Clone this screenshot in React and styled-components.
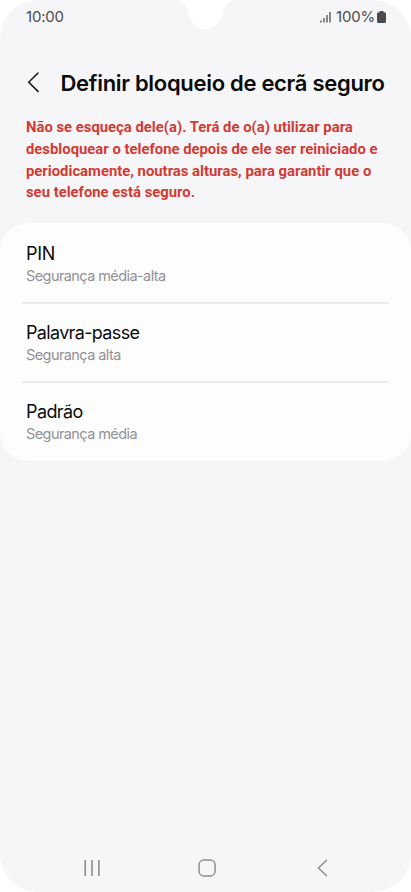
import React from 'react'
import styled, { createGlobalStyle } from 'styled-components'

const GlobalStyle = createGlobalStyle`
    * {
        box-sizing: border-box;
    }
    body {
        margin: 0;
        background-color: #ffffff;
        overflow: hidden;
    }
`
const Screen = styled.div`
    position: relative;
    display: flex;
    flex-direction: column;
    width: 411px;
    height: 892px;
    overflow: hidden;
    background-color: #f6f6f8;
    border-radius: 38px;
    font-family: Inter, "Liberation Sans", sans-serif;
`
const Notch = styled.svg`
    position: absolute;
    top: 0;
    left: 176px;
`
const StatusBar = styled.div`
    display: flex;
    justify-content: space-between;
    align-items: center;
    height: 33px;
    padding: 0 25px 0 26px;
    color: #4c4c4e;
    font-size: 15px;
`
const Clock = styled.span`
    letter-spacing: -0.2px;
`
const Status = styled.div`
    display: flex;
    align-items: center;
`
const Percent = styled.span`
    margin: 0 2px 0 4px;
    letter-spacing: -0.2px;
`
const Header = styled.div`
    display: flex;
    align-items: center;
    height: 44px;
    margin-top: 28px;
    padding-left: 27px;
`
const Title = styled.h1`
    margin: 0 0 0 20.5px;
    color: #0a0a0a;
    font-size: 22px;
    font-weight: 600;
    letter-spacing: -0.3px;
    line-height: 30px;
    white-space: nowrap;
`
const Warning = styled.p`
    margin: 12px 0 0;
    padding-left: 26px;
    color: #d23a33;
    font-family: Roboto, sans-serif;
    font-size: 14.8px;
    font-weight: 700;
    letter-spacing: 0.02px;
    line-height: 21.8px;
    white-space: nowrap;
`
const Line = styled.span`
    display: block;
`
const Card = styled.div`
    height: 238px;
    margin-top: 18.8px;
    padding: 0 22px;
    background-color: #fdfdfe;
    border-radius: 28px;
`
const Option = styled.div`
    height: 79.2px;
    padding: 19px 4px 0;
    & + & {
        border-top: 2px solid #ebebed;
        padding-top: 17.1px;
    }
`
const Name = styled.div`
    color: #0c0c0c;
    font-size: 18px;
    letter-spacing: ${props => props.$spacing};
    line-height: 24px;
`
const Level = styled.div`
    color: #929295;
    font-size: 14.5px;
    letter-spacing: -0.58px;
    line-height: 20px;
`
const NavBar = styled.div`
    display: flex;
    justify-content: space-between;
    align-items: center;
    height: 48px;
    margin-top: auto;
    padding: 0 79px 0 82px;
`

const options = [
    { name: 'PIN', level: 'Segurança média-alta', spacing: '-0.3px' },
    { name: 'Palavra-passe', level: 'Segurança alta', spacing: '-0.66px' },
    { name: 'Padrão', level: 'Segurança média', spacing: '-0.6px' },
]

const App = () => {
    return (
        <>
            <GlobalStyle/>
            <Screen>
                <Notch width="60" height="30" viewBox="0 0 60 30">
                    <path d="M0 0C7 1 10 5 11.500 11C14 22 20 29 29.500 29C39 29 45 22 47.500 11C49 5 52 1 59 0Z" fill="#fff"/>
                </Notch>
                <StatusBar>
                    <Clock>10:00</Clock>
                    <Status>
                        <svg width="12" height="12" viewBox="0 0 12 12" stroke="#59595b" strokeWidth="1.400">
                            <path d="M0.900 9.500V11.500M4 7V11.500M7 4V11.500M10 1V11.500"/>
                        </svg>
                        <Percent>100%</Percent>
                        <svg width="9" height="12" viewBox="0 0 9 12" fill="#4c4c4e">
                            <path d="M2.500 0H6.500V1.300H7.500Q9 1.300 9 2.800V10.500Q9 12 7.500 12H1.500Q0 12 0 10.500V2.800Q0 1.300 1.500 1.300H2.500Z"/>
                        </svg>
                    </Status>
                </StatusBar>
                <Header>
                    <svg width="13" height="22" viewBox="0 0 13 22" fill="none" stroke="#141414" strokeWidth="1.500">
                        <path d="M11 1L1.700 10.200L11 19.400" strokeLinecap="round" strokeLinejoin="round"/>
                    </svg>
                    <Title>Definir bloqueio de ecrã seguro</Title>
                </Header>
                <Warning>
                    <Line>Não se esqueça dele(a). Terá de o(a) utilizar para</Line>
                    <Line>desbloquear o telefone depois de ele ser reiniciado e</Line>
                    <Line>periodicamente, noutras alturas, para garantir que o</Line>
                    <Line>seu telefone está seguro.</Line>
                </Warning>
                <Card>
                    {options.map(option => (
                        <Option key={option.name}>
                            <Name $spacing={option.spacing}>{option.name}</Name>
                            <Level>{option.level}</Level>
                        </Option>
                    ))}
                </Card>
                <NavBar>
                    <svg width="20" height="20" viewBox="0 0 20 20" stroke="#8e8e90" strokeWidth="1.600">
                        <path d="M3.200 2V18M10 2V18M16.900 2V18"/>
                    </svg>
                    <svg width="20" height="20" viewBox="0 0 20 20" fill="none" stroke="#8e8e90" strokeWidth="1.500">
                        <rect x="2.100" y="2" width="16" height="16" rx="4.800"/>
                    </svg>
                    <svg width="20" height="20" viewBox="0 0 20 20" fill="none" stroke="#8e8e90" strokeWidth="1.500">
                        <path d="M14.800 2L6.500 10L14.800 18"/>
                    </svg>
                </NavBar>
            </Screen>
        </>
    )
}

export default App
